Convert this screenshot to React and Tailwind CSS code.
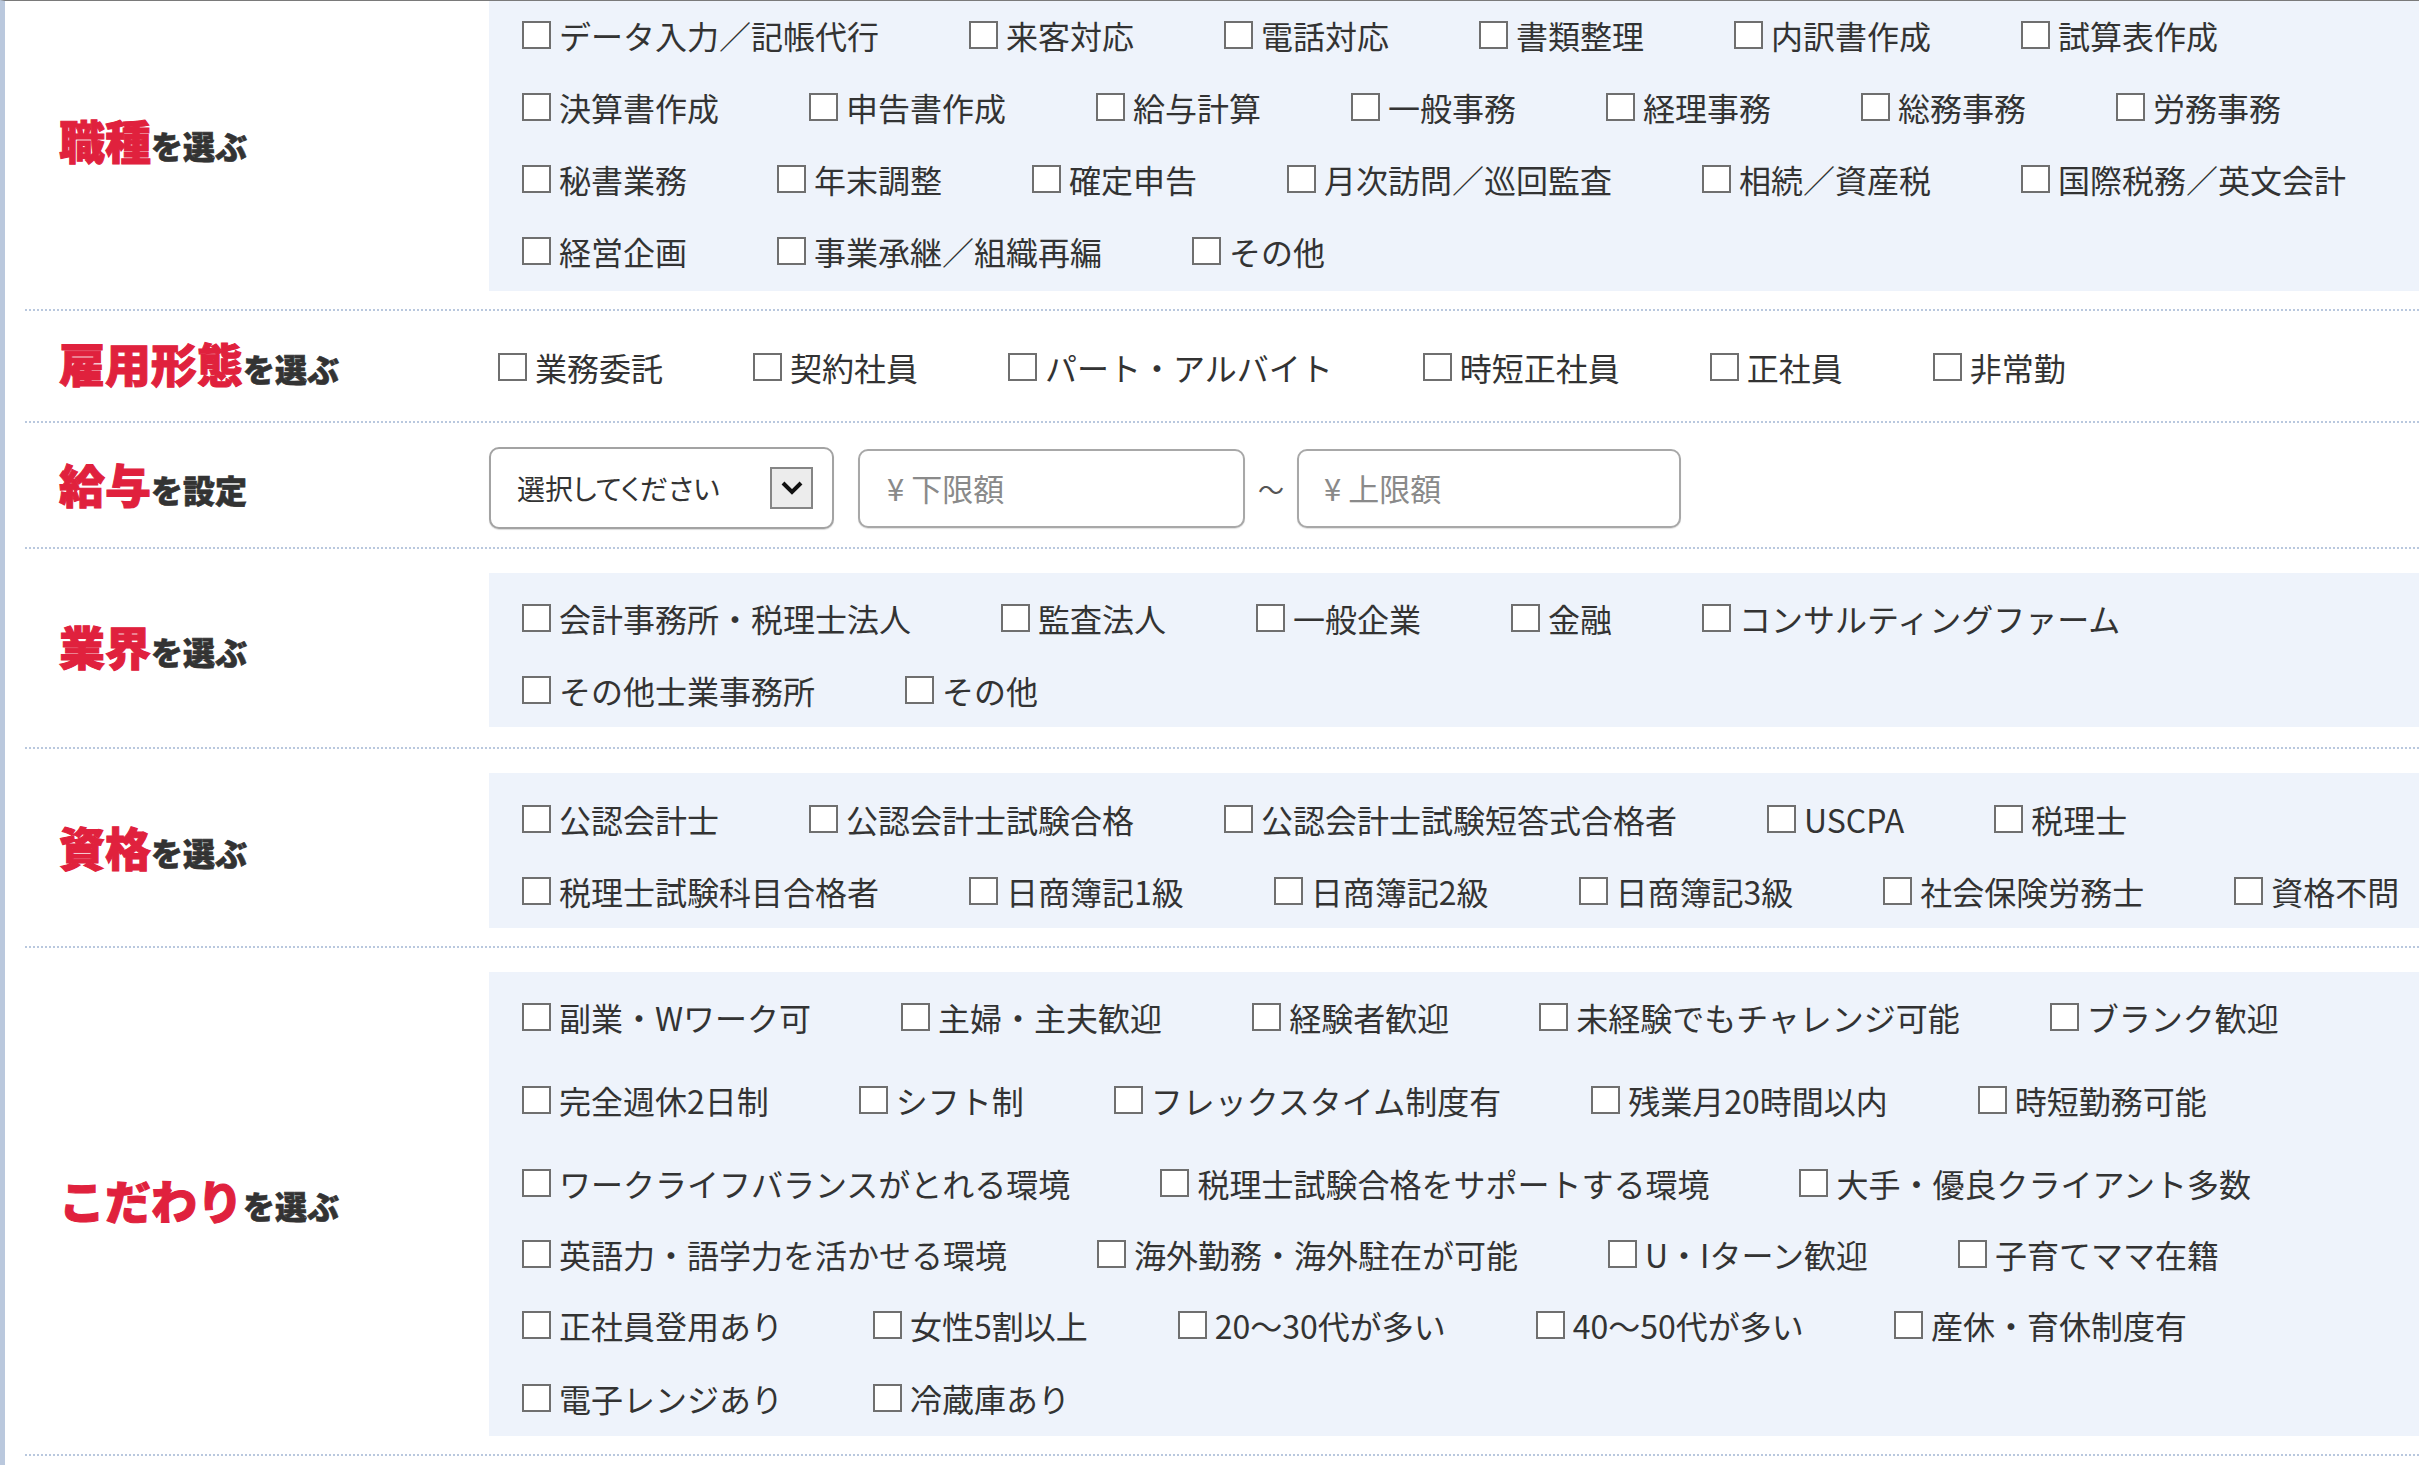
import { useState } from "react";

// Checkbox rows are listed line by line so the wrap matches the page
const jobRows = [
  ["データ入力／記帳代行", "来客対応", "電話対応", "書類整理", "内訳書作成", "試算表作成"],
  ["決算書作成", "申告書作成", "給与計算", "一般事務", "経理事務", "総務事務", "労務事務"],
  ["秘書業務", "年末調整", "確定申告", "月次訪問／巡回監査", "相続／資産税", "国際税務／英文会計"],
  ["経営企画", "事業承継／組織再編", "その他"],
];

const employRow = ["業務委託", "契約社員", "パート・アルバイト", "時短正社員", "正社員", "非常勤"];

const industryRows = [
  ["会計事務所・税理士法人", "監査法人", "一般企業", "金融", "コンサルティングファーム"],
  ["その他士業事務所", "その他"],
];

const licenseRows = [
  ["公認会計士", "公認会計士試験合格", "公認会計士試験短答式合格者", "USCPA", "税理士"],
  ["税理士試験科目合格者", "日商簿記1級", "日商簿記2級", "日商簿記3級", "社会保険労務士", "資格不問"],
];

const prefRows = [
  { m: "mb-[11px]", items: ["副業・Wワーク可", "主婦・主夫歓迎", "経験者歓迎", "未経験でもチャレンジ可能", "ブランク歓迎"] },
  { m: "mb-[11px]", items: ["完全週休2日制", "シフト制", "フレックスタイム制度有", "残業月20時間以内", "時短勤務可能"] },
  { m: "-mb-[1px]", items: ["ワークライフバランスがとれる環境", "税理士試験合格をサポートする環境", "大手・優良クライアント多数"] },
  { m: "-mb-[1px]", items: ["英語力・語学力を活かせる環境", "海外勤務・海外駐在が可能", "U・Iターン歓迎", "子育てママ在籍"] },
  { m: "mb-[1px]", items: ["正社員登用あり", "女性5割以上", "20～30代が多い", "40～50代が多い", "産休・育休制度有"] },
  { m: "", items: ["電子レンジあり", "冷蔵庫あり"] },
];

const Check = ({ label }) => {
  const [on, setOn] = useState(false);
  return (
    <label className="flex items-center cursor-pointer" onClick={() => setOn(!on)}>
      <span className="w-[29px] h-[28px] border-2 border-[#6f6f6f] bg-white shrink-0 flex items-center justify-center text-[20px] leading-none">
        {on ? "✓" : ""}
      </span>
      <span className="ml-[8px] text-[32px] leading-none text-[#333]">{label}</span>
    </label>
  );
};

const Row = ({ items, m = "" }) => (
  <div className={`flex items-center gap-x-[90px] whitespace-nowrap h-[72px] ${m}`}>
    {items.map((t) => (
      <Check key={t} label={t} />
    ))}
  </div>
);

const Label = ({ main, sub, pb = "pb-[10px]" }) => (
  <div className={`w-[464px] shrink-0 pl-[34px] flex items-center ${pb}`}>
    <div className="flex items-baseline font-black leading-none">
      <span className="text-[46px] text-[#e0213d] [-webkit-text-stroke:1px_#e0213d]">{main}</span>
      <span className="text-[32px] text-[#333] [-webkit-text-stroke:0.6px_#333]">{sub}</span>
    </div>
  </div>
);

const Section = ({ className = "", children }) => (
  <div className={`flex border-b-2 border-dotted border-[#b9c8de] ${className}`}>{children}</div>
);

export default function App() {
  return (
    <div
      className="min-h-screen w-full bg-white border-t border-t-[#7a7a7a] border-l-[5px] border-l-[#bac8dd] pl-[20px] overflow-hidden"
      style={{ fontFamily: '"Noto Sans CJK JP", "Noto Sans", sans-serif' }}
    >
      {/* 職種 */}
      <Section className="pb-[18px]">
        <Label main="職種" sub="を選ぶ" pb="pb-[14px]" />
        <div className="flex-1 bg-[#eef3fb] pl-[33px] h-[290px]">
          <div className="-mt-[2px]">
            {jobRows.map((r, i) => (
              <Row key={i} items={r} />
            ))}
          </div>
        </div>
      </Section>

      {/* 雇用形態 */}
      <Section className="pt-[20px] pb-[18px]">
        <Label main="雇用形態" sub="を選ぶ" />
        <div className="flex-1 pl-[9px]">
          <Row items={employRow} />
        </div>
      </Section>

      {/* 給与 */}
      <Section className="pt-[24px] pb-[18px]">
        <Label main="給与" sub="を設定" />
        <div className="flex-1 flex items-center">
          <div className="w-[345px] h-[82px] rounded-[10px] border-2 border-[#a3a3a3] bg-white flex items-center justify-between pl-[26px] pr-[19px] shadow-[0_1px_1px_rgba(0,0,0,0.15)]">
            <span className="text-[28px] text-[#333] [font-feature-settings:'palt']">選択してください</span>
            <span className="w-[43px] h-[42px] bg-[#ececec] border-2 border-[#858585] flex items-center justify-center">
              <svg width="22" height="14" viewBox="0 0 22 14">
                <path d="M2 2 L11 11 L20 2" fill="none" stroke="#111" strokeWidth="4" />
              </svg>
            </span>
          </div>
          <div className="ml-[24px] w-[387px] h-[79px] rounded-[10px] border-2 border-[#a8a8a8] bg-white flex items-center pl-[27px] text-[31px] text-[#8a8a8a] shadow-[0_1px_1px_rgba(0,0,0,0.12)]">
            ¥ 下限額
          </div>
          <span className="w-[52px] text-center text-[26px] text-[#555]">～</span>
          <div className="w-[384px] h-[79px] rounded-[10px] border-2 border-[#a8a8a8] bg-white flex items-center pl-[25px] text-[31px] text-[#8a8a8a] shadow-[0_1px_1px_rgba(0,0,0,0.12)]">
            ¥ 上限額
          </div>
        </div>
      </Section>

      {/* 業界 */}
      <Section className="pt-[24px] pb-[20px]">
        <Label main="業界" sub="を選ぶ" />
        <div className="flex-1 bg-[#eef3fb] pl-[33px] pt-[9px] pb-[1px]">
          {industryRows.map((r, i) => (
            <Row key={i} items={r} />
          ))}
        </div>
      </Section>

      {/* 資格 */}
      <Section className="pt-[24px] pb-[18px]">
        <Label main="資格" sub="を選ぶ" />
        <div className="flex-1 bg-[#eef3fb] pl-[33px] pt-[10px] pb-[1px]">
          {licenseRows.map((r, i) => (
            <Row key={i} items={r} />
          ))}
        </div>
      </Section>

      {/* こだわり */}
      <Section className="pt-[24px] pb-[18px]">
        <Label main="こだわり" sub="を選ぶ" />
        <div className="flex-1 bg-[#eef3fb] pl-[33px] pt-[9px] pb-[2px]">
          {prefRows.map((r, i) => (
            <Row key={i} items={r.items} m={r.m} />
          ))}
        </div>
      </Section>
    </div>
  );
}
